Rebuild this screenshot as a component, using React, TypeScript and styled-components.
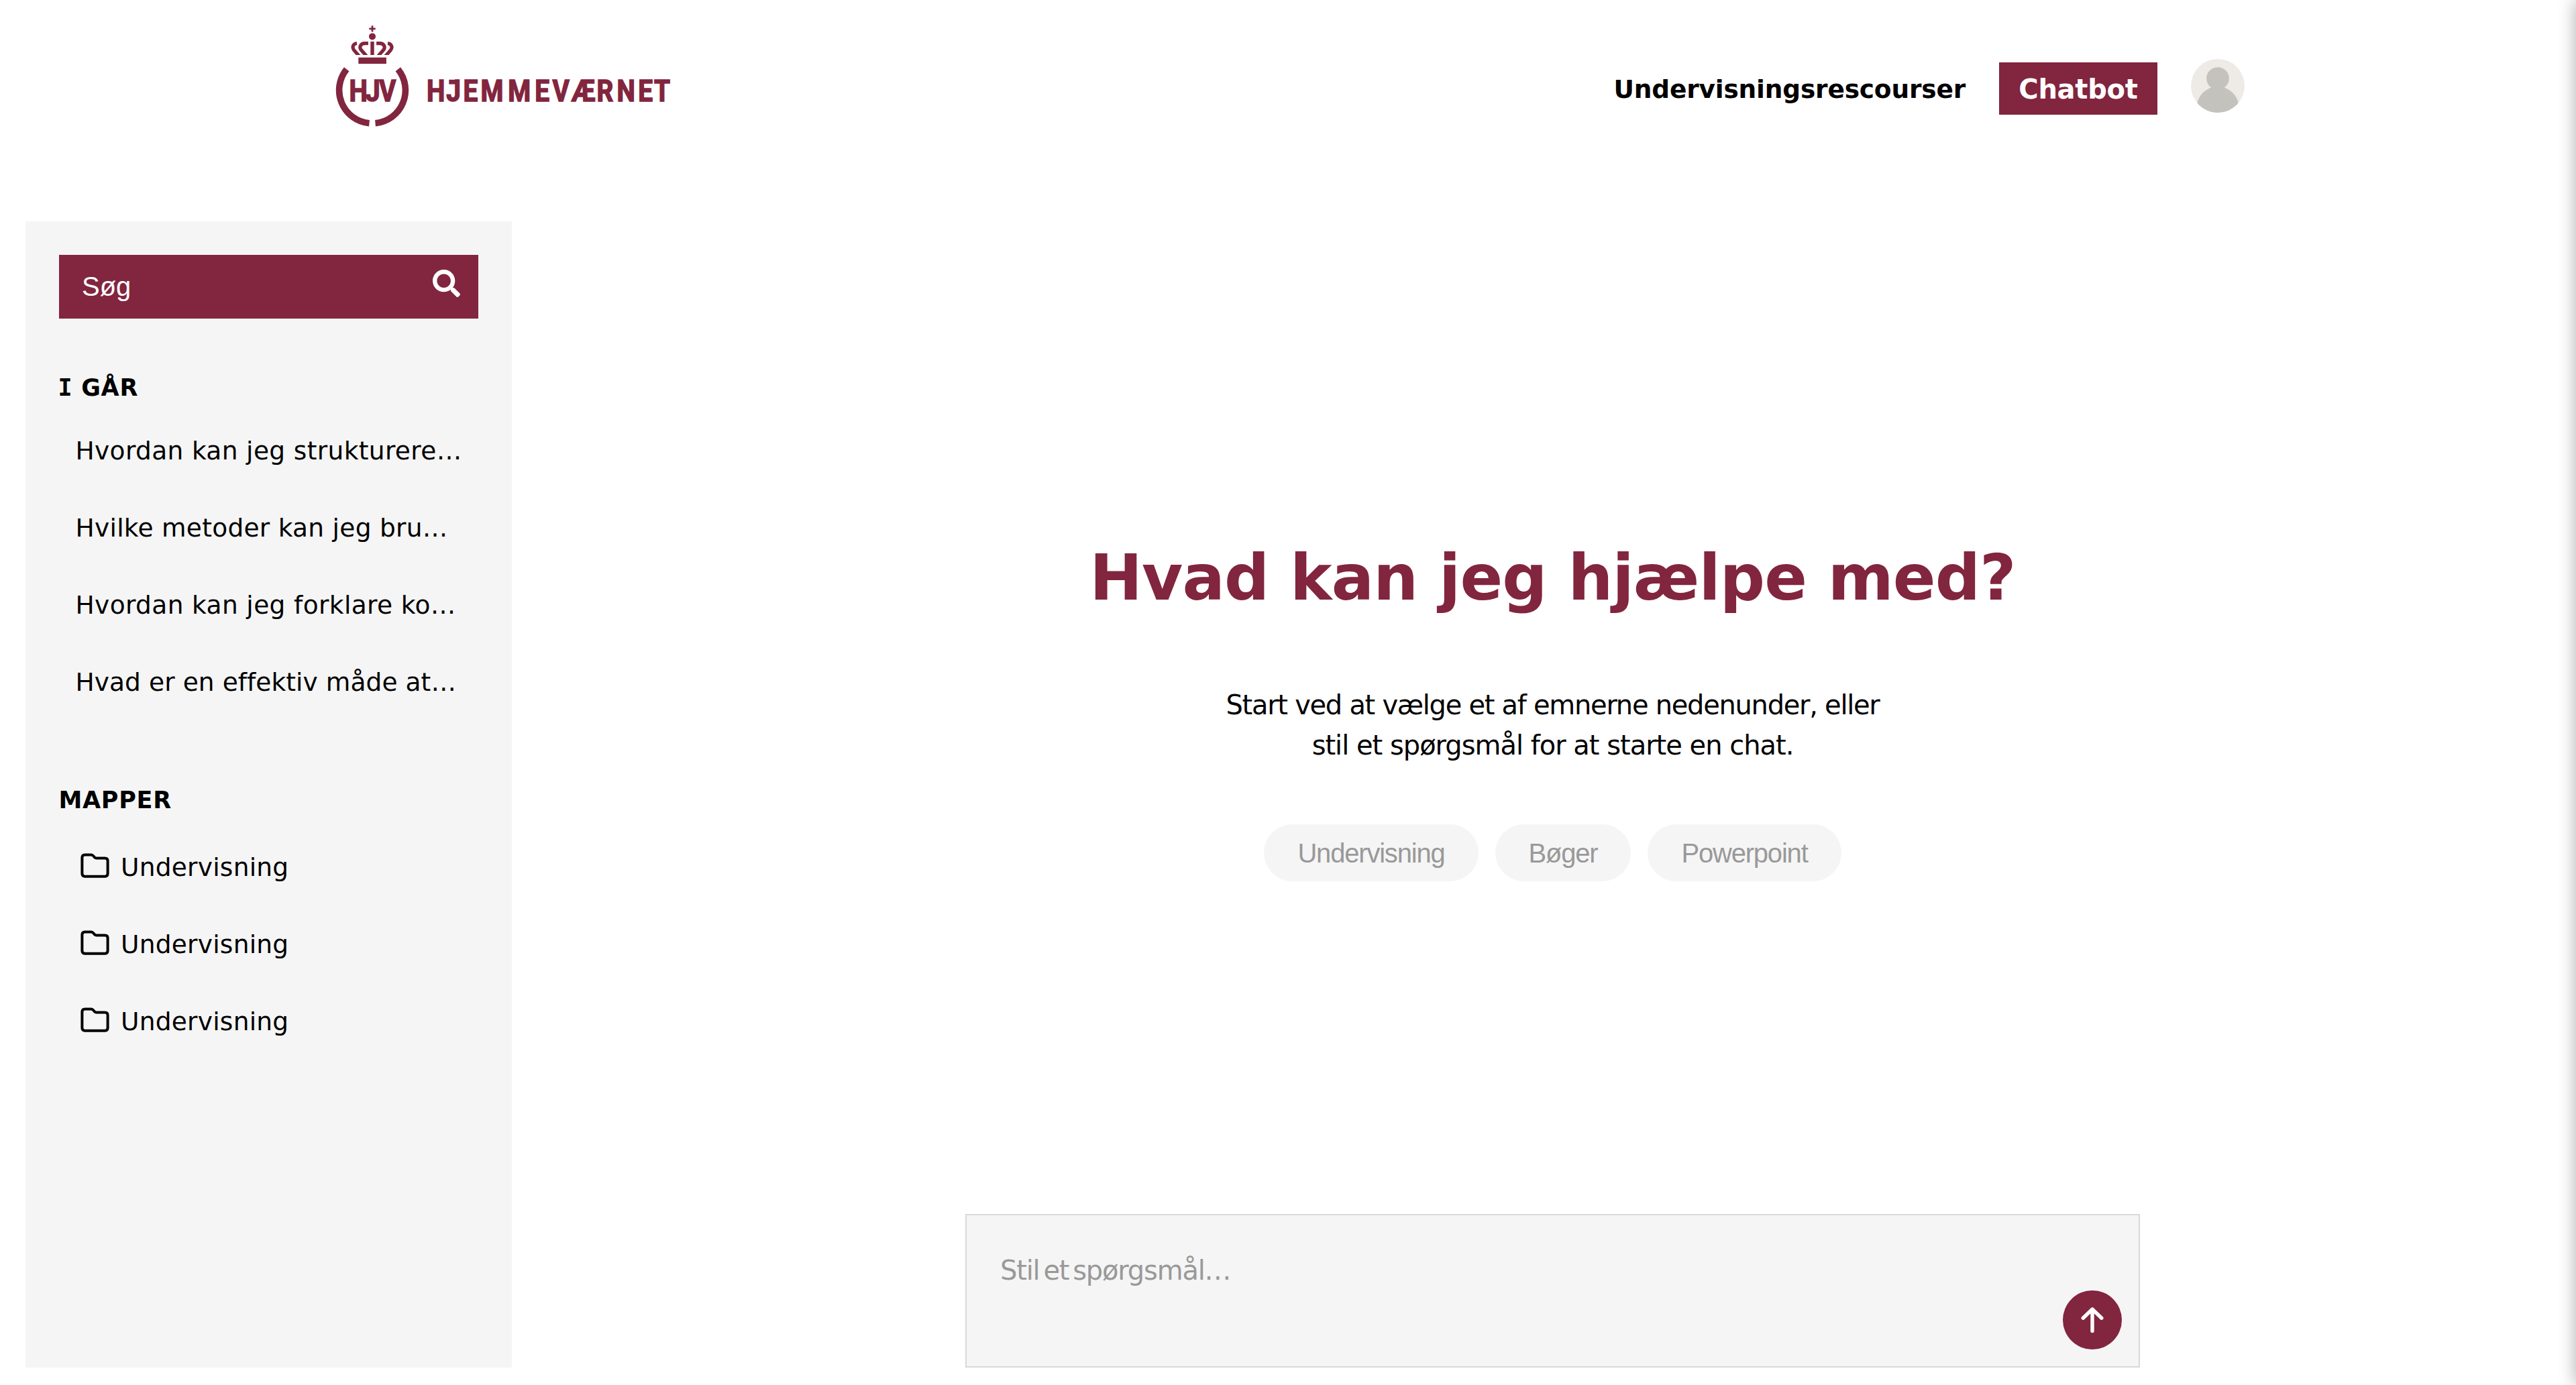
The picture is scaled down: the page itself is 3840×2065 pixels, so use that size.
import React from "react";
import styled, { createGlobalStyle } from "styled-components";
import { FaSearch } from "react-icons/fa";

const wine = "#82253e";
const panel = "#f5f5f5";
const muted = "#999999";

const GlobalStyle = createGlobalStyle`
  *, *::before, *::after { box-sizing: border-box; }
  body {
    margin: 0;
    background: #fff;
    color: #000;
    font-family: Verdana, "DejaVu Sans", sans-serif;
    overflow: hidden;
  }
`;

const Page = styled.div`
  position: relative;
  display: flex;
  flex-direction: column;
  height: 2065px;
  overflow: hidden;
`;

/* Closed drawer waiting past the right edge; only its shadow shows. */
const Drawer = styled.aside`
  position: absolute;
  top: 0;
  bottom: 0;
  left: 100%;
  width: 100px;
  box-shadow: 0 0 25px rgba(0, 0, 0, 0.32);
`;

const Header = styled.header`
  display: flex;
  align-items: flex-start;
  justify-content: space-between;
  height: 330px;
  padding: 36px 494px 0 500px;
`;

const Nav = styled.nav`
  display: flex;
  align-items: flex-start;
`;

const NavLink = styled.a`
  margin: 67px 50px 0 0;
  font-size: 37.5px;
  font-weight: bold;
  line-height: 60px;
  letter-spacing: -0.18px;
  white-space: nowrap;
`;

const ChatbotButton = styled.a`
  width: 236px;
  height: 78px;
  margin: 57px 50px 0 0;
  background: ${wine};
  color: #fff;
  font-size: 40px;
  font-weight: bold;
  line-height: 80px;
  letter-spacing: -0.26px;
  text-align: center;
`;

const Avatar = styled.svg`
  width: 80px;
  height: 80px;
  margin-top: 52px;
`;

const Main = styled.main`
  display: flex;
`;

const Sidebar = styled.aside`
  width: 725px;
  height: 1709px;
  margin-left: 37.5px;
  padding: 50px;
  background: ${panel};
`;

const SearchBox = styled.div`
  display: flex;
  justify-content: space-between;
  height: 95px;
  padding: 0 27px 0 34.5px;
  background: ${wine};
  color: #fff;
  font: 40px/94px Arial, "Liberation Sans", sans-serif;

  svg { margin-top: 22px; }
`;

const SectionTitle = styled.h2<{ $top: number }>`
  margin: ${(p) => p.$top}px 0 0;
  font-size: 35px;
  line-height: 50px;
  letter-spacing: 0.7px;
`;

const SerifCapital = styled.span`
  font-family: "DejaVu Sans Mono", monospace;
  margin-left: -1px;
`;

const HistoryList = styled.ul`
  margin: 12px 0 0;
  padding: 0 0 0 25px;
  list-style: none;
`;

const HistoryItem = styled.li<{ $spacing: number }>`
  height: 115px;
  font-size: 37.5px;
  line-height: 115px;
  letter-spacing: ${(p) => p.$spacing}px;
  white-space: nowrap;
`;

const FolderList = styled.ul`
  margin: 17px 0 0;
  padding: 0 0 0 32px;
  list-style: none;
`;

const FolderItem = styled.li`
  display: flex;
  gap: 17.5px;
  height: 115px;
  font-size: 37.5px;
  line-height: 116px;
  letter-spacing: 0.25px;

  svg { margin-top: 37px; }
`;

const Chat = styled.section`
  display: flex;
  flex-direction: column;
  align-items: center;
  width: 1751px;
  margin-left: 676.5px;
`;

const Heading = styled.h1`
  margin: 475px 0 0;
  color: ${wine};
  font-size: 94px;
  line-height: 114px;
  letter-spacing: -0.9px;
  white-space: nowrap;
`;

const Intro = styled.p`
  display: flex;
  flex-direction: column;
  align-items: center;
  margin: 102px 0 0;
  font-size: 40px;
  line-height: 60px;
  white-space: nowrap;
`;

const IntroLine = styled.span<{ $spacing: number }>`
  letter-spacing: ${(p) => p.$spacing}px;
`;

const Chips = styled.div`
  display: flex;
  gap: 25px;
  margin-top: 88px;
`;

const Chip = styled.button`
  height: 85px;
  padding: 0 50px;
  border: 0;
  border-radius: 43px;
  background: ${panel};
  color: ${muted};
  font: 40px/86px Arial, "Liberation Sans", sans-serif;
  letter-spacing: -1.2px;
`;

const Composer = styled.div`
  display: flex;
  justify-content: space-between;
  width: 1751px;
  height: 229px;
  margin-top: 496px;
  padding: 0 25px 25px 50px;
  border: 2px solid #d9d9d9;
  background: ${panel};
`;

const Placeholder = styled.span`
  margin-top: 52px;
  color: ${muted};
  font-size: 40px;
  line-height: 60px;
  letter-spacing: -1.2px;
  word-spacing: -5.6px;
`;

const Dots = styled.span`
  letter-spacing: 0.7px;
`;

const SendButton = styled.button`
  display: grid;
  place-items: center;
  align-self: flex-end;
  width: 88px;
  height: 88px;
  padding: 0;
  border: 0;
  border-radius: 50%;
  background: ${wine};
`;

/* Each letter of the logo is set at its own x on a narrowed grid. */
const NARROW = 0.88;
const place = (xs: number[]) => xs.map((x) => (x / NARROW).toFixed(2)).join(" ");
const wordmarkX = [636, 665.3, 690.6, 716.4, 757.2, 797.3, 823.6, 851.6, 889.6, 919.6, 951.2, 975];
const badgeX = [520.4, 545, 565];

const CrownHalf = () => (
  <g fill="none" stroke={wine} strokeWidth="5.2">
    <path d="M548.9 64.6 H544 C536.8 64.6 535.2 71 538.6 74.8 L548.5 86" />
    <path d="M532 64.5 C526 65.3 524.6 70.8 527.6 74.6 L537.4 86" />
  </g>
);

const Logo = () => (
  <svg width="500" height="154" viewBox="500 36 500 154" fill={wine}>
    <defs>
      <clipPath id="crown"><rect x="500" y="61" width="110" height="21" /></clipPath>
    </defs>
    <path d="M550.3 42.9h9.4M555 38.2v9.4" stroke={wine} strokeWidth="2.7" />
    <circle cx="555" cy="54.4" r="5" />
    <g clipPath="url(#crown)">
      <rect x="552.3" y="62" width="5.4" height="20" />
      <CrownHalf />
      <g transform="translate(1110 0) scale(-1 1)"><CrownHalf /></g>
    </g>
    <rect x="534.3" y="85.7" width="41.6" height="9.4" />
    <g fill="none" stroke={wine} strokeWidth="9.6">
      <path d="M516.7 103.3A49.4 49.4 0 0 0 550.5 183.7" />
      <path d="M593.3 103.3A49.4 49.4 0 0 1 559.5 183.7" />
    </g>
    <g
      transform={`scale(${NARROW} 1)`}
      fontFamily="Roboto, sans-serif"
      fontWeight="700"
      fontSize="44"
      stroke={wine}
      strokeWidth="1.5"
    >
      <text y="150.8" x={place(badgeX)}>HJV</text>
      <text y="150.8" x={place(wordmarkX)}>HJEMMEVÆRNET</text>
    </g>
    <rect x="669.3" y="118.8" width="10" height="6.8" />
  </svg>
);

const FolderIcon = () => (
  <svg width="43" height="38" viewBox="0 0 43 38" fill="none" stroke="#000" strokeWidth="4" strokeLinejoin="round">
    <path d="M6.4 2.4H15.6C17.2 2.4 18 2.9 19 4L21.3 6.6C22 7.3 22.5 7.5 23.5 7.5H36.5C39.5 7.5 40.6 9 40.6 11.5V30.6C40.6 33.4 39.2 34.7 36.6 34.7H6.4C3.8 34.7 2.4 33.4 2.4 30.6V6.4C2.4 3.8 3.8 2.4 6.4 2.4Z" />
  </svg>
);

const history: [string, number][] = [
  ["Hvordan kan jeg strukturere…", 0.36],
  ["Hvilke metoder kan jeg bru…", 0.28],
  ["Hvordan kan jeg forklare ko…", 0.38],
  ["Hvad er en effektiv måde at…", 0.08],
];
const folders = ["Undervisning", "Undervisning", "Undervisning"];
const topics = ["Undervisning", "Bøger", "Powerpoint"];

export default function App() {
  return (
    <Page>
      <GlobalStyle />
      <Header>
        <Logo />
        <Nav>
          <NavLink>Undervisningsrescourser</NavLink>
          <ChatbotButton>Chatbot</ChatbotButton>
          <Avatar viewBox="0 0 80 80">
            <clipPath id="avatar"><circle cx="40" cy="40" r="40" /></clipPath>
            <g clipPath="url(#avatar)">
              <rect width="80" height="80" fill="#eeebe6" />
              <circle cx="40" cy="72.5" r="31.5" fill="#c4c2bd" />
              <circle cx="40" cy="29" r="16.8" fill="#c4c2bd" />
            </g>
          </Avatar>
        </Nav>
      </Header>
      <Main>
        <Sidebar>
          <SearchBox>
            <span>Søg</span>
            <FaSearch size={41} />
          </SearchBox>
          <SectionTitle $top={78}><SerifCapital>I</SerifCapital> GÅR</SectionTitle>
          <HistoryList>
            {history.map(([text, spacing]) => (
              <HistoryItem key={text} $spacing={spacing}>{text}</HistoryItem>
            ))}
          </HistoryList>
          <SectionTitle $top={93}>MAPPER</SectionTitle>
          <FolderList>
            {folders.map((name, i) => (
              <FolderItem key={i}><FolderIcon />{name}</FolderItem>
            ))}
          </FolderList>
        </Sidebar>
        <Chat>
          <Heading>Hvad kan jeg hjælpe med?</Heading>
          <Intro>
            <IntroLine $spacing={-1.29}>Start ved at vælge et af emnerne nedenunder, eller</IntroLine>
            <IntroLine $spacing={-1.02}>stil et spørgsmål for at starte en chat.</IntroLine>
          </Intro>
          <Chips>
            {topics.map((t) => <Chip key={t}>{t}</Chip>)}
          </Chips>
          <Composer>
            <Placeholder>Stil et spørgsmål<Dots>...</Dots></Placeholder>
            <SendButton>
              <svg width="34" height="40" viewBox="0 0 34 40" fill="none" stroke="#fff" strokeWidth="5.4" strokeLinecap="round" strokeLinejoin="round">
                <path d="M17 36.5V4M3.2 17.2L17 4L30.8 17.2" />
              </svg>
            </SendButton>
          </Composer>
        </Chat>
      </Main>
      <Drawer />
    </Page>
  );
}
